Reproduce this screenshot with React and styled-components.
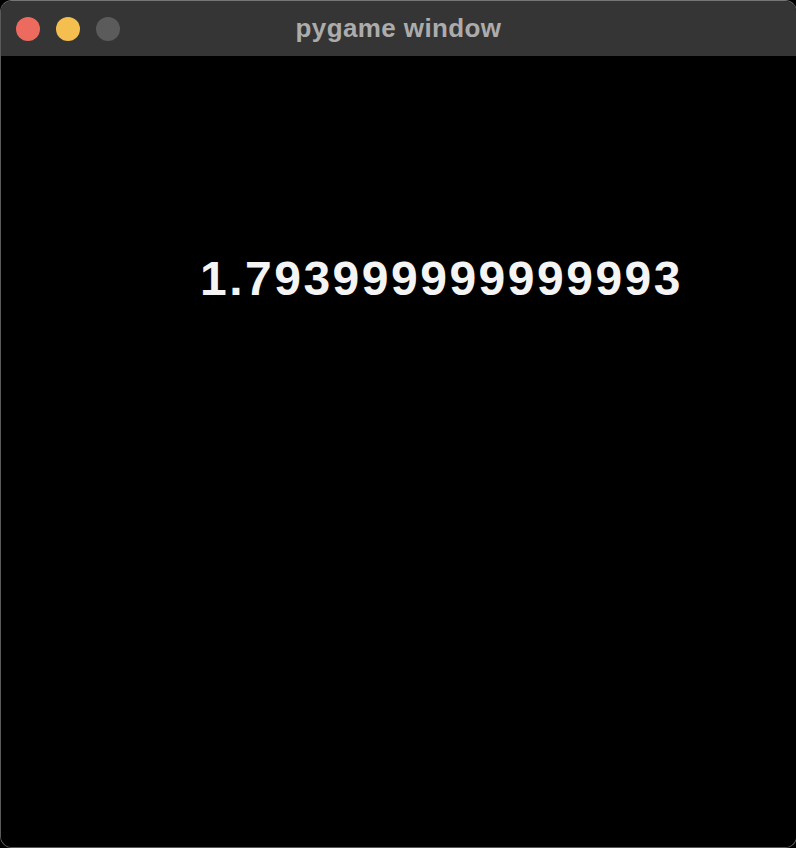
import React from 'react';
import styled, { createGlobalStyle } from 'styled-components';

const GlobalStyle = createGlobalStyle`
  html, body {
    margin: 0;
    padding: 0;
    background: #000;
    overflow: hidden;
  }
`;

const Window = styled.div`
  width: 797px;
  height: 848px;
  box-sizing: border-box;
  display: flex;
  flex-direction: column;
  background: #000;
  border: 1px solid #5a5a5a;
  border-top-color: #767676;
  border-radius: 12px;
  overflow: hidden;
`;

const TitleBar = styled.div`
  position: relative;
  height: 55px;
  flex-shrink: 0;
  display: flex;
  align-items: center;
  gap: 16px;
  padding-left: 15px;
  background: #353535;
`;

const Light = styled.span`
  width: 24px;
  height: 24px;
  border-radius: 50%;
  background: ${(p) => p.color};
`;

const Title = styled.div`
  position: absolute;
  left: 0;
  right: 0;
  top: 0;
  bottom: 0;
  display: flex;
  align-items: center;
  justify-content: center;
  padding-bottom: 1px;
  font-family: 'Liberation Sans', Arial, sans-serif;
  font-weight: 700;
  font-size: 26px;
  letter-spacing: 0.4px;
  color: #acacac;
  pointer-events: none;
`;

const Surface = styled.div`
  flex: 1;
  background: #000;
  padding: 199px 0 0 199px;
`;

const Value = styled.div`
  font-family: 'Liberation Sans', Arial, sans-serif;
  font-weight: 700;
  font-size: 48px;
  line-height: 1;
  letter-spacing: 2.5px;
  color: #f4f4f4;
  white-space: nowrap;
`;

const App = () => {
  return (
    <>
      <GlobalStyle />
      <Window>
        <TitleBar>
          <Light color="#ec6a5e" />
          <Light color="#f4bf4f" />
          <Light color="#5b5b5b" />
          <Title>pygame window</Title>
        </TitleBar>
        <Surface>
          <Value>1.793999999999993</Value>
        </Surface>
      </Window>
    </>
  );
};

export default App;
